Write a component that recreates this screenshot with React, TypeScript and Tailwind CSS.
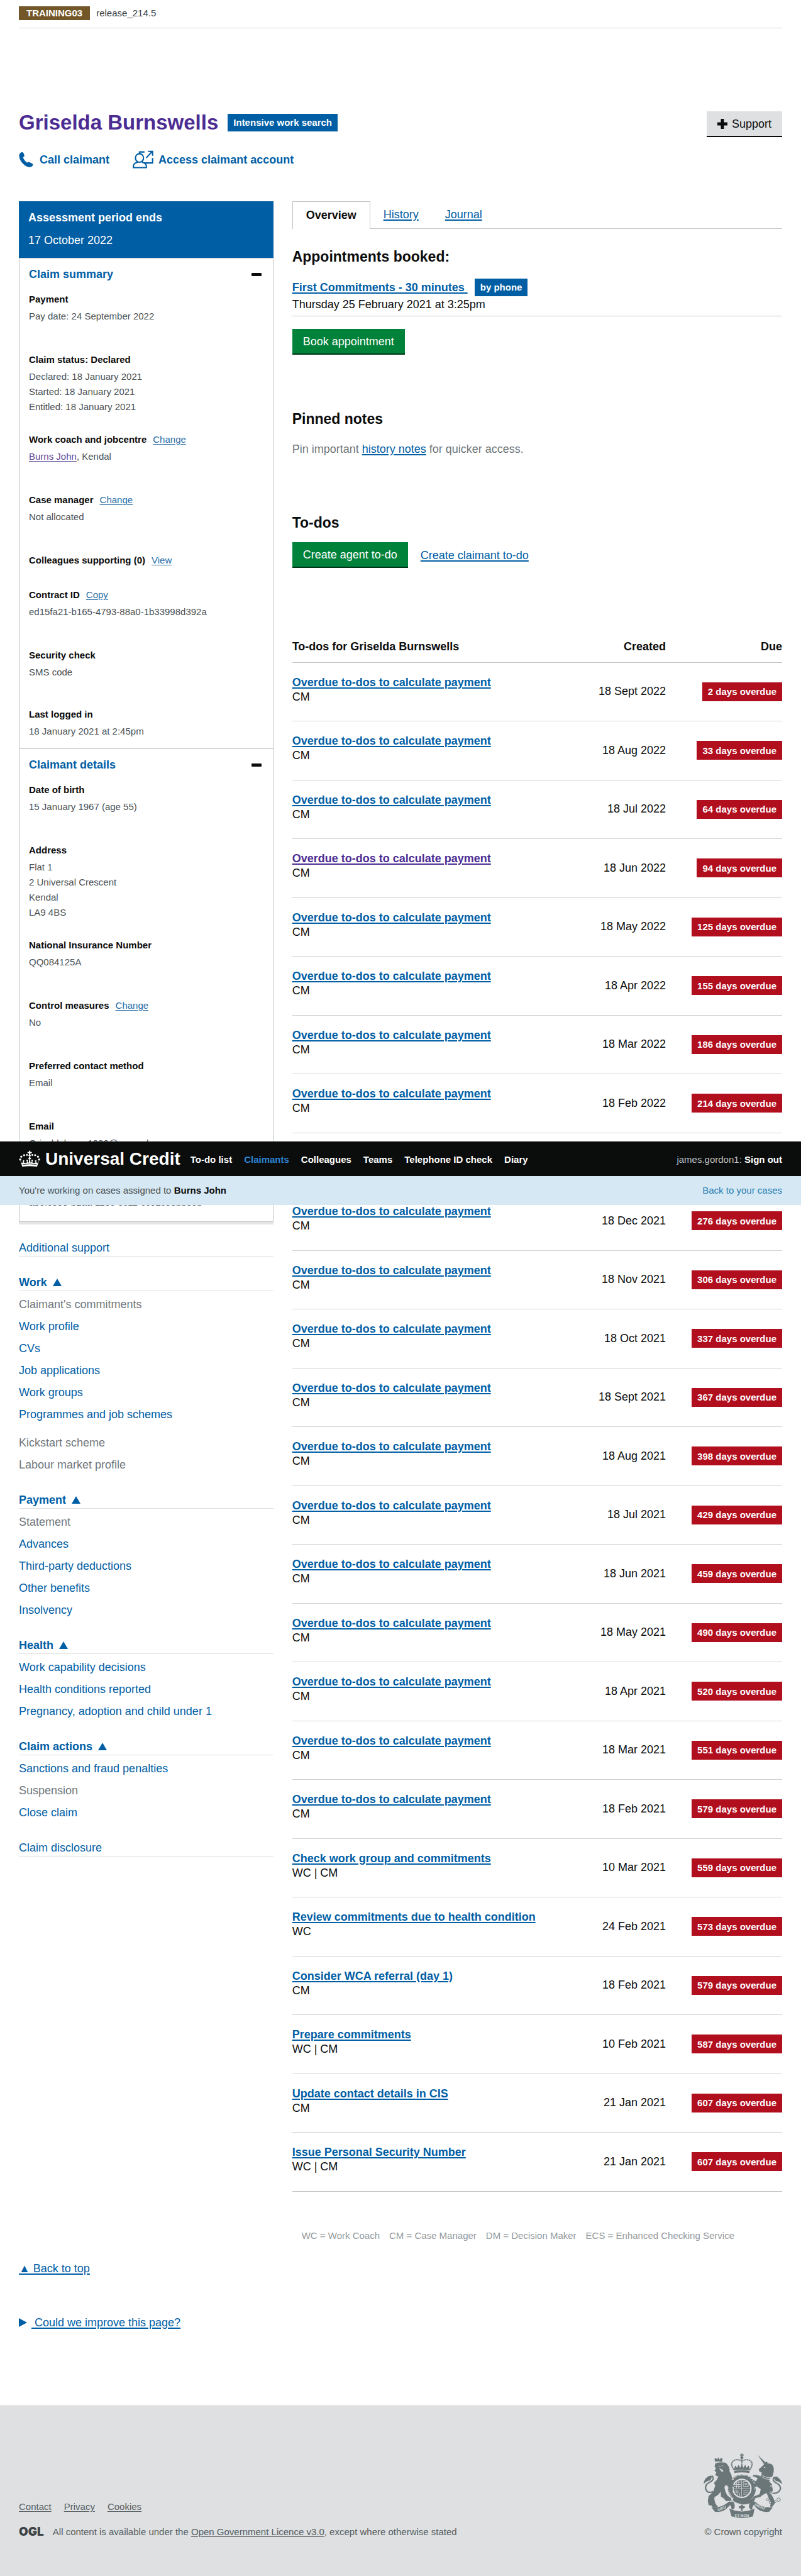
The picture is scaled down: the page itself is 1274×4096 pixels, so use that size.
import type { ReactNode } from "react";

const link = "text-[#005ea5] underline decoration-2 underline-offset-2";
const smallLink = "text-[#2b6ea6] underline underline-offset-2";

type Detail = {
  title: string;
  action?: string;
  lines?: ReactNode[];
  gap?: string;
  covered?: boolean;
};

const claimSummary: Detail[] = [
  { title: "Payment", lines: ["Pay date: 24 September 2022"] },
  {
    title: "Claim status: Declared",
    lines: ["Declared: 18 January 2021", "Started: 18 January 2021", "Entitled: 18 January 2021"],
    gap: "mb-7",
  },
  {
    title: "Work coach and jobcentre",
    action: "Change",
    lines: [
      <>
        <a href="#coach" className="text-[#5c4696] underline underline-offset-2">Burns John</a>, Kendal
      </>,
    ],
  },
  { title: "Case manager", action: "Change", lines: ["Not allocated"] },
  { title: "Colleagues supporting (0)", action: "View", gap: "mb-[31px]" },
  { title: "Contract ID", action: "Copy", lines: ["ed15fa21-b165-4793-88a0-1b33998d392a"] },
  { title: "Security check", lines: ["SMS code"], gap: "mb-[43px]" },
  { title: "Last logged in", lines: ["18 January 2021 at 2:45pm"], gap: "mb-[14px]" },
];

const claimantDetails: Detail[] = [
  { title: "Date of birth", lines: ["15 January 1967 (age 55)"] },
  { title: "Address", lines: ["Flat 1", "2 Universal Crescent", "Kendal", "LA9 4BS"], gap: "mb-7" },
  { title: "National Insurance Number", lines: ["QQ084125A"] },
  { title: "Control measures", action: "Change", lines: ["No"] },
  { title: "Preferred contact method", lines: ["Email"] },
  { title: "Email", lines: ["Griseldaburns1980@example.com"], gap: "mb-[43px]" },
  { title: "Claimant ID", lines: ["ab0fc8e0-b1aa-11ec-8c11-cc01ce8bb3eb"], gap: "mb-[17px]", covered: true },
];

const calc = "Overdue to-dos to calculate payment";
const todos: [string, string, string, string][] = [
  [calc, "CM", "18 Sept 2022", "2 days overdue"],
  [calc, "CM", "18 Aug 2022", "33 days overdue"],
  [calc, "CM", "18 Jul 2022", "64 days overdue"],
  [calc, "CM", "18 Jun 2022", "94 days overdue"],
  [calc, "CM", "18 May 2022", "125 days overdue"],
  [calc, "CM", "18 Apr 2022", "155 days overdue"],
  [calc, "CM", "18 Mar 2022", "186 days overdue"],
  [calc, "CM", "18 Feb 2022", "214 days overdue"],
  [calc, "CM", "18 Jan 2022", "245 days overdue"],
  [calc, "CM", "18 Dec 2021", "276 days overdue"],
  [calc, "CM", "18 Nov 2021", "306 days overdue"],
  [calc, "CM", "18 Oct 2021", "337 days overdue"],
  [calc, "CM", "18 Sept 2021", "367 days overdue"],
  [calc, "CM", "18 Aug 2021", "398 days overdue"],
  [calc, "CM", "18 Jul 2021", "429 days overdue"],
  [calc, "CM", "18 Jun 2021", "459 days overdue"],
  [calc, "CM", "18 May 2021", "490 days overdue"],
  [calc, "CM", "18 Apr 2021", "520 days overdue"],
  [calc, "CM", "18 Mar 2021", "551 days overdue"],
  [calc, "CM", "18 Feb 2021", "579 days overdue"],
  ["Check work group and commitments", "WC | CM", "10 Mar 2021", "559 days overdue"],
  ["Review commitments due to health condition", "WC", "24 Feb 2021", "573 days overdue"],
  ["Consider WCA referral (day 1)", "CM", "18 Feb 2021", "579 days overdue"],
  ["Prepare commitments", "WC | CM", "10 Feb 2021", "587 days overdue"],
  ["Update contact details in CIS", "CM", "21 Jan 2021", "607 days overdue"],
  ["Issue Personal Security Number", "WC | CM", "21 Jan 2021", "607 days overdue"],
];
const visitedRow = 3;
/* the row that lies behind the floating header */
const coveredRow = 8;

const menu: { title: string; items: { text: string; off?: boolean; apart?: boolean }[] }[] = [
  {
    title: "Work",
    items: [
      { text: "Claimant's commitments", off: true },
      { text: "Work profile" },
      { text: "CVs" },
      { text: "Job applications" },
      { text: "Work groups" },
      { text: "Programmes and job schemes" },
      { text: "Kickstart scheme", off: true, apart: true },
      { text: "Labour market profile", off: true },
    ],
  },
  {
    title: "Payment",
    items: [
      { text: "Statement", off: true },
      { text: "Advances" },
      { text: "Third-party deductions" },
      { text: "Other benefits" },
      { text: "Insolvency" },
    ],
  },
  {
    title: "Health",
    items: [
      { text: "Work capability decisions" },
      { text: "Health conditions reported" },
      { text: "Pregnancy, adoption and child under 1" },
    ],
  },
  {
    title: "Claim actions",
    items: [
      { text: "Sanctions and fraud penalties" },
      { text: "Suspension", off: true },
      { text: "Close claim" },
    ],
  },
];

function PhoneIcon() {
  return (
    <svg viewBox="0 0 24 26" className="h-6 w-[23px] fill-[#005ea5]" aria-hidden="true">
      <path d="M3.6.2Q6.6-.6 7.6 1.6L9 5.4Q9.4 7.4 6.6 9 8.4 13.8 13.6 18.2 15.4 16 17.4 17L22.4 19.6Q24.6 21 23.6 22.8 21.4 26.2 17.6 25.8 9.6 24.6 3.6 16.2-.8 9.4.2 4.4.8 1.2 3.6.2Z" />
    </svg>
  );
}

function AccountIcon() {
  return (
    <svg viewBox="0 0 35 30" className="h-[29px] w-[33px] fill-none stroke-[#005ea5] stroke-[2.2]" aria-hidden="true">
      <ellipse cx="11.5" cy="12.5" rx="6.8" ry="7.2" />
      <path d="M7.6 18.6V20Q1.2 21.4 1.2 27v1.8h22V27q0-5.600-6.400-7v-1.400" />
      <path d="M11.500 5V2.400H20M33.600 12.500V21H19.500M23 12.500 32.500 2M26 1.400h7.600V9" />
    </svg>
  );
}

function Triangle() {
  return (
    <svg viewBox="0 0 14 12" className="ml-[9px] h-3 w-[14px] fill-[#005ea5]" aria-hidden="true">
      <path d="M7 0 14 12H0Z" />
    </svg>
  );
}

function CrownLogo() {
  return (
    <svg viewBox="36 48 114 90" className="h-[27px] w-[34px] fill-white" aria-hidden="true">
      <path d="M90 50h7v7h8v7h-8v8h-7v-8h-8v-7h8z" />
      <circle cx="93.500" cy="76" r="6" />
      <circle cx="79" cy="73" r="5" />
      <circle cx="64" cy="74" r="5.500" />
      <circle cx="49" cy="82" r="5.500" />
      <circle cx="43" cy="97" r="5.500" />
      <circle cx="108" cy="73" r="5" />
      <circle cx="123" cy="74" r="5.500" />
      <circle cx="138" cy="82" r="5.500" />
      <circle cx="144" cy="97" r="5.500" />
      <path d="M43 100 54 135Q93 129 133 135L144 100 136 116 129 112V98L121 104 126 112 117 116 107 112 112 98H102L105 110 98 114 96 96 102 92 93.500 82 85 92 91 96 89 114 82 110 85 98H75L80 112 70 116 61 112 66 104 58 98V112L51 116Z" />
      <path d="M56 124Q93 117 131 124" fill="none" stroke="#0b0c0c" strokeWidth="2.500" />
    </svg>
  );
}

function Crest() {
  return (
    <svg viewBox="146 357 404 331" className="h-[103px] w-[125px] fill-[#6b7678]" role="img" aria-label="Royal coat of arms">
      {/* royal crown */}
      <circle cx="343" cy="378" r="8" />
      <path d="M339 358h8v10h-8zM334 362h18v6h-18z" />
      <g fill="none" stroke="#6b7678">
        <path d="M302 440Q278 405 305 391 330 384 343 398 356 384 382 391 408 405 384 440" strokeWidth="6" strokeDasharray="7 2" />
        <path d="M343 386V440" strokeWidth="6" strokeDasharray="6 2" />
        <path d="M304 452Q343 444 382 452" strokeWidth="11" />
      </g>
      <path d="M302 444 308 418 318 430 326 414 334 430 343 414 352 430 360 414 368 430 378 418 384 444Q343 434 302 444Z" />
      {/* garter and shield */}
      <circle cx="343" cy="536" r="61" fill="none" stroke="#6b7678" strokeWidth="22" />
      <path id="garter" d="M302 586A65 65 0 1 1 386 584" fill="none" />
      <text className="fill-[#dee0e2] text-[19px] font-bold">
        <textPath href="#garter">HONI SOIT QUI MAL Y PENSE</textPath>
      </text>
      <circle cx="343" cy="536" r="43" />
      <g fill="none" stroke="#dee0e2" strokeWidth="2.500">
        <circle cx="343" cy="536" r="46" />
        <path d="M341 492V580M299 538H387M305 516H337M303 526H337M314 504H337M316 503V534M327 496V534" />
        <path d="M306 545Q322 550 322 570M312 542Q332 550 332 576M320 560 300 550" />
        <path d="M350 500h26v26h-26zM356 513q8-9 14 0-6 9-14 0M350 546h26M350 556h28M350 566h20" />
      </g>
      <path d="M300 586Q322 606 343 608 372 604 404 582L408 598Q378 622 343 618 312 612 296 598Z" />
      {/* lion */}
      <path d="M206 400 202 384 210 380 216 388 222 376 229 388 236 379 244 384 241 401Q222 394 206 400Z" />
      <path d="M206 408Q222 398 258 404 282 420 280 450 296 472 290 490L304 500 298 514 306 530 294 526 298 548 282 540 266 520Q252 520 254 534 256 552 268 572L288 588 290 600 262 602 250 588 236 578 234 552Q220 574 202 580L202 596 208 616 220 630 196 634 186 624 172 622 168 600 172 576 196 552 206 522 200 508 214 492 222 476 206 468 212 452 202 446 210 434 203 424Z" />
      <path d="M196 552Q162 566 156 534 156 512 182 502 204 488 192 474L170 478" fill="none" stroke="#6b7678" strokeWidth="7" />
      <path d="M147 514Q146 484 180 470 196 480 178 496 160 498 147 514Z" />
      <path d="M222 424l12-2M240 418l8 4M228 434l10 4-4 6zM236 442l8-2 2 10-8-2z" fill="#dee0e2" stroke="#dee0e2" strokeWidth="2" />
      {/* unicorn */}
      <path d="M424 364 466 404 456 410Z" />
      <path d="M462 404 472 398 476 408Q500 406 506 428 510 448 500 474L488 484 484 500 498 516 502 546 494 566 506 588 514 610 500 630 488 630 492 608 482 588 470 560Q450 568 438 580L412 586 404 606 394 596 402 578 434 566 440 540 420 526 408 528 398 516 412 512 402 494 416 500 424 484 408 476 398 474 404 466 424 468 440 474 446 456 432 448 430 438 452 418Z" />
      <g fill="none" stroke="#6b7678">
        <path d="M500 562Q536 562 542 536 540 516 516 506 496 494 508 480L528 482" strokeWidth="7" />
        <path d="M404 494q-10 6-2 16l14 14" strokeWidth="5" />
        <circle cx="476" cy="594" r="6" strokeWidth="3" />
        <circle cx="489" cy="607" r="6" strokeWidth="3" />
        <circle cx="514" cy="604" r="5" strokeWidth="3" />
        <circle cx="532" cy="594" r="9" strokeWidth="3" />
      </g>
      <path d="M549 516Q550 490 518 474 500 484 518 498 538 500 549 516Z" />
      <g fill="none" stroke="#dee0e2" strokeWidth="3">
        <path d="M446 466q20 18 46 14M444 476q20 16 44 14M456 428l8 2" />
        <circle cx="496" cy="524" r="5" />
        <circle cx="492" cy="558" r="5" />
      </g>
      {/* motto ribbon */}
      <path d="M186 632Q236 640 276 604L300 604Q316 640 292 646L288 634Q286 616 278 626 248 664 204 656Z" />
      <path d="M502 632Q450 640 410 604L386 604Q370 640 394 646L398 634Q400 616 408 626 438 664 484 656Z" />
      <path d="M278 640Q343 670 408 640L400 680Q343 696 290 680Z" />
      <path d="M338 620h10v8l8-2 4 8-8 6-6-2 2 14h-10l2-14-6 2-8-6 4-8 8 2z" />
      <g className="fill-[#dee0e2] text-[19px] font-bold">
        <text x="306" y="681">ET MON</text>
        <text transform="translate(222 654) rotate(-24)">DIEU</text>
        <text transform="translate(406 624) rotate(24)">DROIT</text>
      </g>
    </svg>
  );
}

function Section({ title, items, className }: { title: string; items: Detail[]; className?: string }) {
  return (
    <section className={className}>
      <button type="button" className="flex h-[50px] w-full items-center justify-between pr-[3px] text-lg font-bold text-[#005ea5]">
        {title}
        <span className="h-[5px] w-4 rounded-[1px] bg-[#0b0c0c]" />
      </button>
      <dl className="pt-[3px] text-[15px] leading-6">
        {items.map((d) => (
          <div key={d.title} className={d.gap ?? "mb-[45px]"}>
            <dt className={d.covered ? "invisible" : "flex gap-[10px] font-bold"}>
              {d.title}
              {d.action && (
                <a href="#edit" className={`${smallLink} font-normal`}>
                  {d.action}
                </a>
              )}
            </dt>
            {d.lines && (
              <dd className="pt-[3px] text-[#4b5154]">
                {d.lines.map((l, i) => (
                  <div key={i}>{l}</div>
                ))}
              </dd>
            )}
          </div>
        ))}
      </dl>
    </section>
  );
}

function MenuHeading({ children }: { children: ReactNode }) {
  return <h2 className="flex h-7 items-center border-b border-[#dee0e2]">{children}</h2>;
}

function Sidebar() {
  return (
    <aside className="w-1/3 shrink-0">
      <div className="h-[90px] bg-[#005ea5] px-[15px] pt-4 text-lg leading-5 text-white">
        <p className="font-bold">Assessment period ends</p>
        <p className="mt-4">17 October 2022</p>
      </div>
      <div className="border border-[#bfc1c3] shadow-[0_4px_0_#e4e5e6]">
        <Section title="Claim summary" items={claimSummary} className="px-[15px] pb-px" />
        <Section title="Claimant details" items={claimantDetails} className="border-t border-[#bfc1c3] px-[15px] pb-px" />
      </div>
      <nav className="mt-[27px] text-lg">
        <MenuHeading>
          <a href="#support" className="text-[#005ea5]">Additional support</a>
        </MenuHeading>
        <div className="mt-[27px] flex flex-col gap-6">
          {menu.map((g) => (
            <div key={g.title}>
              <MenuHeading>
                <button type="button" className="flex items-center font-bold text-[#005ea5]">
                  {g.title}
                  <Triangle />
                </button>
              </MenuHeading>
              <ul className="pt-1 leading-[35px]">
                {g.items.map((i) => (
                  <li key={i.text} className={i.apart ? "mt-[10px]" : undefined}>
                    {i.off ? (
                      <span className="text-[#6f777b]">{i.text}</span>
                    ) : (
                      <a href="#menu" className="text-[#005ea5]">{i.text}</a>
                    )}
                  </li>
                ))}
              </ul>
            </div>
          ))}
          <MenuHeading>
            <a href="#disclosure" className="text-[#005ea5]">Claim disclosure</a>
          </MenuHeading>
        </div>
      </nav>
    </aside>
  );
}

function GreenButton({ children }: { children: ReactNode }) {
  return (
    <button type="button" className="h-[41px] border-b-2 border-[#003618] bg-[#00823b] px-[17px] text-lg text-white">
      {children}
    </button>
  );
}

function TodoTable() {
  return (
    <table className="mt-[102px] w-full border-collapse text-lg leading-[23px]">
      <thead>
        <tr className="h-12 border-b border-[#bfc1c3]">
          <th className="text-left">To-dos for Griselda Burnswells</th>
          <th className="text-right">Created</th>
          <th className="w-[185px] text-right">Due</th>
        </tr>
      </thead>
      <tbody>
        {todos.map(([name, who, created, due], i) => (
          <tr
            key={i}
            className={`h-[93px] border-b border-[#d0d2d4] last:border-[#bfc1c3] even:h-[94px] ${i === coveredRow ? "invisible" : ""}`}
          >
            <td className="pt-5 align-top">
              <a
                href="#todo"
                className={
                  i === visitedRow
                    ? "font-bold text-[#4c2c92] underline decoration-2 underline-offset-2"
                    : `${link} font-bold`
                }
              >
                {name}
              </a>
              <div>{who}</div>
            </td>
            <td className="text-right">{created}</td>
            <td>
              <div className="flex justify-end">
                <span className="flex h-[30px] items-center bg-[#b10e1e] px-[9px] text-[15px] font-bold text-white">{due}</span>
              </div>
            </td>
          </tr>
        ))}
      </tbody>
    </table>
  );
}

function MainColumn() {
  return (
    <main className="min-w-0 flex-1">
      <nav className="flex h-11 text-lg leading-[42px]">
        <a href="#overview" className="border border-b-0 border-[#bfc1c3] px-[21px] font-bold">Overview</a>
        <div className="flex flex-1 border-b border-[#bfc1c3]">
          <a href="#history" className={`${link} mx-[21px]`}>History</a>
          <a href="#journal" className={`${link} mx-[21px]`}>Journal</a>
        </div>
      </nav>

      <h2 className="mt-[30px] text-[23px] leading-7 font-bold">Appointments booked:</h2>
      <div className="mt-[21px] border-b border-[#bfc1c3] pb-[7px] text-lg leading-[22px]">
        <div className="flex h-7 items-center gap-[11px]">
          <a href="#appointment" className={`${link} font-bold whitespace-pre`}>{"First Commitments - 30 minutes "}</a>
          <span className="bg-[#005ea5] px-[9px] text-[15px] leading-7 font-bold text-white">by phone</span>
        </div>
        <p className="mt-0.5">Thursday 25 February 2021 at 3:25pm</p>
      </div>
      <div className="mt-5 flex">
        <GreenButton>Book appointment</GreenButton>
      </div>

      <h2 className="mt-[88px] text-[23px] leading-7 font-bold">Pinned notes</h2>
      <p className="mt-[23px] text-lg leading-[22px] text-[#6f777b]">
        Pin important <a href="#notes" className={link}>history notes</a> for quicker access.
      </p>

      <h2 className="mt-[92px] text-[23px] leading-7 font-bold">To-dos</h2>
      <div className="mt-[17px] flex items-center gap-5">
        <GreenButton>Create agent to-do</GreenButton>
        <a href="#claimant-todo" className={`${link} text-lg`}>Create claimant to-do</a>
      </div>

      <TodoTable />

      <p className="mt-[59px] flex gap-[15px] pl-[15px] text-[15px] leading-[22px] text-[#93999c]">
        <span>WC = Work Coach</span>
        <span>CM = Case Manager</span>
        <span>DM = Decision Maker</span>
        <span>ECS = Enhanced Checking Service</span>
      </p>
    </main>
  );
}

function FloatingHeader() {
  return (
    <div className="absolute inset-x-0 top-[1815px] text-[15px]">
      <header className="flex h-[55px] items-center bg-[#0b0c0c] px-[30px] font-bold text-white">
        <CrownLogo />
        <span className="ml-2 text-[28px] leading-none">Universal Credit</span>
        <nav className="ml-4 flex gap-[19px] pt-1">
          <a href="#todo-list">To-do list</a>
          <a href="#claimants" className="text-[#2b84d4]">Claimants</a>
          <a href="#colleagues">Colleagues</a>
          <a href="#teams">Teams</a>
          <a href="#telephone">Telephone ID check</a>
          <a href="#diary">Diary</a>
        </nav>
        <p className="ml-auto pt-1">
          <span className="font-normal text-[#bfc1c3]">james.gordon1: </span>
          <a href="#sign-out">Sign out</a>
        </p>
      </header>
      <div className="flex h-[46px] items-center justify-between bg-[#d5e8f3] px-[30px]">
        <p className="text-[#4b5154]">
          You're working on cases assigned to <b className="text-[#0b0c0c]">Burns John</b>
        </p>
        <a href="#cases" className="text-[#2b7fb4]">Back to your cases</a>
      </div>
    </div>
  );
}

function Footer() {
  return (
    <footer className="mt-[121px] flex items-end justify-between border-t border-[#bfc5c8] bg-[#dee0e2] px-[30px] pt-[75px] pb-[61px] text-[15px] leading-5 text-[#565e61]">
      <div>
        <nav className="flex gap-5">
          <a href="#contact" className="underline underline-offset-2">Contact</a>
          <a href="#privacy" className="underline underline-offset-2">Privacy</a>
          <a href="#cookies" className="underline underline-offset-2">Cookies</a>
        </nav>
        <div className="mt-5 flex items-center gap-[14px]">
          <span className="font-[Inter] text-[19px] leading-5 font-black text-[#3c4346]">OGL</span>
          <p>
            All content is available under the{" "}
            <a href="#licence" className="underline underline-offset-2">Open Government Licence v3.0</a>, except where otherwise stated
          </p>
        </div>
      </div>
      <div className="flex flex-col items-end">
        <Crest />
        <a href="#copyright" className="mt-3">© Crown copyright</a>
      </div>
    </footer>
  );
}

export default function App() {
  return (
    <div className="relative bg-white font-['Liberation_Sans',Arial,sans-serif] text-[#0b0c0c]">
      <div className="px-[30px]">
        <div className="flex h-[45px] gap-[10px] border-b border-[#d0d2d4] pt-[10px] text-[15px] leading-[22px]">
          <span className="h-[22px] bg-[#735729] px-3 font-bold text-white">TRAINING03</span>
          <span className="text-[#3c4144]">release_214.5</span>
        </div>

        <div className="flex items-start justify-between pt-[132px]">
          <div className="flex h-[35px] items-center gap-[15px]">
            <h1 className="text-[33px] leading-[35px] font-bold text-[#4c2c92]">Griselda Burnswells</h1>
            <span className="bg-[#005ea5] px-[9px] text-[15px] leading-7 font-bold text-white">Intensive work search</span>
          </div>
          <button type="button" className="flex h-[41px] items-center gap-[7px] border-b-2 border-[#0b0c0c] bg-[#dee0e2] px-[17px] text-lg">
            <svg viewBox="0 0 16 16" className="h-4 w-4 fill-[#0b0c0c]" aria-hidden="true">
              <path d="M5.500 0h5v5.500H16v5h-5.500V16h-5v-5.500H0v-5h5.500z" />
            </svg>
            Support
          </button>
        </div>

        <div className="mt-[21px] flex h-[29px] items-center text-lg font-bold text-[#005ea5]">
          <a href="tel:0" className="flex items-center gap-[10px]">
            <PhoneIcon />
            Call claimant
          </a>
          <a href="#account" className="ml-[37px] flex items-center gap-2">
            <AccountIcon />
            Access claimant account
          </a>
        </div>

        <div className="mt-[52px] flex items-start gap-[30px]">
          <Sidebar />
          <MainColumn />
        </div>

        <div className="mt-[30px] text-lg leading-[22px]">
          <a href="#top" className={link}>▲ Back to top</a>
        </div>
        <details className="mt-16 text-lg leading-[22px]">
          <summary className="flex cursor-pointer list-none items-center gap-[7px]">
            <svg viewBox="0 0 13 14" className="h-[14px] w-[13px] fill-[#005ea5]" aria-hidden="true">
              <path d="M0 0 13 7 0 14Z" />
            </svg>
            <span className={`${link} whitespace-pre`}> Could we improve this page?</span>
          </summary>
        </details>
      </div>
      <Footer />
      <FloatingHeader />
    </div>
  );
}
